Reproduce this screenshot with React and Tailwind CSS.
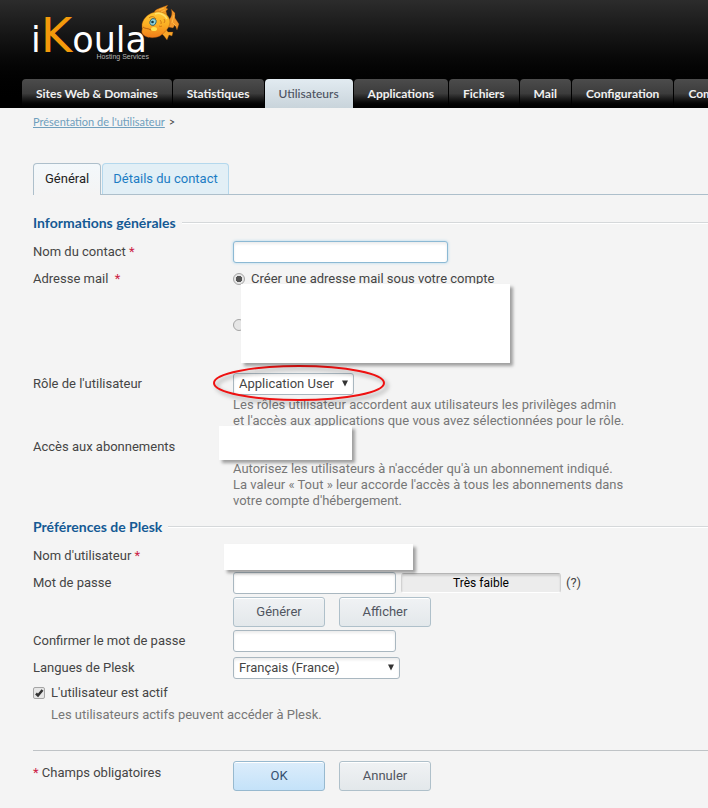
import React, { useState } from 'react';

const navItems = [
  'Sites Web & Domaines',
  'Statistiques',
  'Utilisateurs',
  'Applications',
  'Fichiers',
  'Mail',
  'Configuration',
  'Com',
];

const inputClass =
  'h-[22px] rounded-[3px] border border-[#a9b7c0] bg-white px-[5px] shadow-[inset_0_2px_3px_rgba(0,0,0,0.08)] outline-none';

const Fish = () => (
  <svg className="h-[36px] w-[39px]" viewBox="0 0 39 36" aria-hidden="true">
    <defs>
      <linearGradient id="fish" x1="0" y1="0" x2="0" y2="1">
        <stop offset="0" stopColor="#ffc935" />
        <stop offset="0.5" stopColor="#fbae22" />
        <stop offset="1" stopColor="#f07c1a" />
      </linearGradient>
    </defs>
    <path d="M13 8 C14 4 17 4 19 3 L27 0 L25 3 L27 4 L25 6 L26 10 Z" fill="#f39a24" stroke="#8a4208" strokeWidth="0.3" />
    <path d="M27 16 C30 13 32 9 30 4 L34 8 L34 13 L38 19 L36 25 L34 20 L32 23 L27 22 Z" fill="#f2962a" stroke="#8a4208" strokeWidth="0.3" />
    <path d="M19 27 L25 24 L27 27 L32 27 L31 31 L28 30 L26 35 L23 31 Z" fill="#f8a528" stroke="#8a4208" strokeWidth="0.3" />
    <path d="M1 19 C3 12 8 8 15 7 C22 6 29 10 29 17 C29 23 23 28 19 31 C13 34 3 33 1 28 C0 26 2 24 1 22 Z" fill="url(#fish)" stroke="#a04d0b" strokeWidth="0.4" />
    <path d="M14 9 C19 7 24 10 26 14" fill="none" stroke="#ffe06a" strokeWidth="1.5" />
    <ellipse cx="12" cy="17" rx="3" ry="3.500" transform="rotate(20 12 17)" fill="#8ed3dc" stroke="#23596a" strokeWidth="0.8" />
    <circle cx="11.500" cy="17" r="1.300" fill="#123a48" />
    <path d="M8 13 C10 11 13 11 15 14" fill="none" stroke="#a6540c" strokeWidth="0.7" />
    <path d="M2 22 C4 24 7 23 10 25" fill="none" stroke="#9b4308" strokeWidth="0.7" />
    <ellipse cx="13" cy="24" rx="3" ry="2" fill="#ffe150" />
    <path d="M19 15 q2 2 1 4 M23 14 q2 2 0 4 M18 21 q2 1 3 0" fill="none" stroke="#c3660f" strokeWidth="0.7" />
    <path d="M33 10 L31 18 M35 21 L32 18 M18 5 L23 3 M20 7 L24 5" stroke="#ffc44a" strokeWidth="0.8" />
  </svg>
);

const Logo = () => (
  <a href="#" className="flex h-[79px] items-start pl-[31px] pt-[5px]" aria-label="iKoula Hosting Services">
    <span className="flex w-[110px] flex-col items-end">
      <span className="mt-[12px] flex h-[36px] items-baseline self-start font-['DejaVu_Sans'] text-[35px] leading-[36px] text-white">
        i<span className="text-[48px] text-[#f39a0b]">K</span>oula
      </span>
      <span className="-mr-2 whitespace-nowrap font-['Liberation_Sans'] text-[7px] leading-[8px] text-[#b5b5b5]">
        Hosting Services
      </span>
    </span>
    <Fish />
  </a>
);

const Header = () => (
  <header className="overflow-hidden bg-linear-to-b from-[#2c2c2c] to-black">
    <Logo />
    <nav className="flex gap-[1px] pl-[22px] font-[Lato]">
      {navItems.map((item) => (
        <a
          key={item}
          href="#"
          aria-current={item === 'Utilisateurs' ? 'page' : undefined}
          className={`h-[29px] shrink-0 whitespace-nowrap rounded-t-[4px] px-[14px] text-[12px] leading-[29px] ${
            item === 'Utilisateurs'
              ? 'bg-linear-to-b from-[#e2ebf1] to-[#c9d4db] font-medium text-[#4b5160]'
              : 'bg-linear-to-b from-[#4c4c4c] via-[#3c3c3c] to-black font-bold text-[#f0f0f0]'
          }`}
        >
          {item}
        </a>
      ))}
    </nav>
  </header>
);

const SectionTitle = ({ children }) => (
  <h2 className="mt-2 mb-2 flex h-5 items-center gap-[6px] font-[Lato] text-[14px] leading-4 font-bold text-[#145a94]">
    {children}
    <span className="h-[2px] flex-1 border-t border-[#d5d8da] bg-white" />
  </h2>
);

const Required = () => <span className="text-[#cc2244]">*</span>;

const Row = ({ label, htmlFor, required, children }) => (
  <div className="mb-[5px] flex">
    <label htmlFor={htmlFor} className="w-[200px] shrink-0 leading-[22px]">
      {label} {required && <Required />}
    </label>
    <div className="relative min-w-0 flex-1">{children}</div>
  </div>
);

// blank note laid over private values
const Mask = ({ className }) => (
  <div className={`absolute z-10 bg-white shadow-[3px_3px_3px_rgba(0,0,0,0.35)] ${className}`} />
);

const Select = ({ id, className, options }) => (
  <div className={`relative ${className}`}>
    <select id={id} className={`${inputClass} block w-full appearance-none`}>
      {options.map((option) => (
        <option key={option}>{option}</option>
      ))}
    </select>
    <svg className="pointer-events-none absolute right-[5px] top-[7px] h-[7px] w-[8px]" viewBox="0 0 8 7">
      <path d="M1 0.500h6L4 6.500z" fill="#333" />
    </svg>
  </div>
);

const Button = ({ primary, children }) => (
  <button
    type="button"
    className={`h-[30px] w-[92px] rounded-[3px] border bg-linear-to-b shadow-[inset_0_1px_0_#fff] ${
      primary
        ? 'border-[#97b9cf] from-[#dcedfb] to-[#c4e2f9] text-[#35506f]'
        : 'border-[#afc0ca] from-[#f0f2f4] to-[#e3e8eb] text-[#505560]'
    }`}
  >
    {children}
  </button>
);

const Radio = ({ id, checked, onChange }) => (
  <input
    id={id}
    type="radio"
    name="mail"
    checked={checked}
    onChange={onChange}
    aria-label={id}
    className="h-3 w-3 shrink-0 appearance-none rounded-full border border-[#a5a5a5] bg-[#e6e6e6] checked:bg-radial checked:from-[#555] checked:from-45% checked:to-[#e6e6e6] checked:to-50%"
  />
);

const App = () => {
  const [mail, setMail] = useState('create');
  const [active, setActive] = useState(true);

  return (
    <div className="min-h-screen overflow-hidden bg-[#f4f4f4] pb-4 font-[Roboto,sans-serif] text-[13px] text-[#454545]">
      <Header />

      <main className="pl-[33px]">
        <div className="pt-[6px] font-[Lato] text-[11px] leading-4">
          <a href="#" className="text-[#6f9fbd] underline">Présentation de l'utilisateur</a>
          <span className="ml-1">&gt;</span>
        </div>

        <div className="mt-[33px] mb-[18px] flex h-8 gap-[1px] border-b border-[#adbfcb]">
          <a href="#" className="h-8 rounded-t-[4px] border border-b-0 border-[#adbfcb] bg-linear-to-b from-[#f3f8fb] to-[#f4f4f4] px-[11px] leading-[30px] text-[#222]">
            Général
          </a>
          <a href="#" className="h-[31px] rounded-t-[4px] border border-b-0 border-[#b4d8ed] bg-[#e2eff6] px-[10px] leading-[30px] text-[#1c7cc4]">
            Détails du contact
          </a>
        </div>

        <form>
          <SectionTitle>Informations générales</SectionTitle>
          <Row label="Nom du contact" htmlFor="contact" required>
            <input
              id="contact"
              type="text"
              className="block h-[22px] w-[215px] rounded-[3px] border border-[#8cb9d4] bg-white px-[5px] shadow-[0_0_3px_#a9d3ea,inset_0_2px_3px_rgba(0,0,0,0.08)] outline-none"
            />
          </Row>
          <Row label={'Adresse mail\u00a0'} htmlFor="create" required>
            <div className="flex h-[100px] flex-col gap-6">
              <div className="flex h-[22px] items-center gap-[6px]">
                <Radio id="create" checked={mail === 'create'} onChange={() => setMail('create')} />
                <label htmlFor="create">Créer une adresse mail sous votre compte</label>
              </div>
              <div className="flex h-[22px] items-center">
                <Radio id="other" checked={mail === 'other'} onChange={() => setMail('other')} />
              </div>
            </div>
            <Mask className="left-2 top-4 h-[79px] w-[269px]" />
          </Row>
          <Row label="Rôle de l'utilisateur" htmlFor="role">
            <Select id="role" className="w-[121px]" options={['Application User']} />
            <p className="mt-[2px] pb-[2px] leading-4 text-[#777]">
              Les rôles utilisateur accordent aux utilisateurs les privilèges admin
              <br />
              et l'accès aux applications que vous avez sélectionnées pour le rôle.
            </p>
            <svg
              className="pointer-events-none absolute -left-[21px] -top-[8px] h-[38px] w-[178px] drop-shadow-[3px_3px_2px_rgba(0,0,0,0.35)]"
              viewBox="0 0 178 38"
            >
              <ellipse cx="87" cy="18" rx="85" ry="17" fill="none" stroke="#ee1111" strokeWidth="2" />
            </svg>
          </Row>
          <Row label="Accès aux abonnements">
            <Mask className="-left-[14px] -top-[10px] h-[34px] w-[133px]" />
            <p className="pt-[25px] leading-4 text-[#777]">
              Autorisez les utilisateurs à n'accéder qu'à un abonnement indiqué.
              <br />
              La valeur « Tout » leur accorde l'accès à tous les abonnements dans
              <br />
              votre compte d'hébergement.
            </p>
          </Row>

          <SectionTitle>Préférences de Plesk</SectionTitle>
          <Row label="Nom d'utilisateur" required>
            <Mask className="-left-[9px] -top-px h-[26px] w-[189px]" />
          </Row>
          <Row label="Mot de passe" htmlFor="password">
            <div className="flex items-center gap-[5px]">
              <input id="password" type="password" className={`${inputClass} w-[163px]`} />
              <div className="h-5 w-[160px] rounded-[3px] border border-t-[#b5b5b5] border-x-[#d2d2d2] border-b-white bg-[#ececec] text-center text-[12px] leading-[18px] text-black shadow-[inset_0_2px_2px_rgba(0,0,0,0.12)]">
                Très faible
              </div>
              <span>(?)</span>
            </div>
            <div className="-mb-[2px] mt-[3px] flex gap-[14px]">
              <Button>Générer</Button>
              <Button>Afficher</Button>
            </div>
          </Row>
          <Row label="Confirmer le mot de passe" htmlFor="confirm">
            <input id="confirm" type="password" className={`${inputClass} block w-[163px]`} />
          </Row>
          <Row label="Langues de Plesk" htmlFor="lang">
            <Select id="lang" className="w-[167px]" options={['Français (France)']} />
          </Row>

          <div className="flex h-[18px] items-center gap-[6px]">
            <span className="relative flex">
              <input
                id="active"
                type="checkbox"
                checked={active}
                onChange={() => setActive(!active)}
                className="h-3 w-3 appearance-none rounded-[2px] border border-[#a5a5a5] bg-[#e6e6e6]"
              />
              {active && (
                <svg className="pointer-events-none absolute inset-0 h-3 w-3" viewBox="0 0 12 12">
                  <path d="M3 6.500L5 8.500L9.500 3" fill="none" stroke="#333" strokeWidth="2.500" />
                </svg>
              )}
            </span>
            <label htmlFor="active">L'utilisateur est actif</label>
          </div>
          <p className="mt-[5px] ml-[18px] leading-4 text-[#777]">Les utilisateurs actifs peuvent accéder à Plesk.</p>

          <div className="mt-[27px] flex border-t border-[#bfc3c6] pt-[10px]">
            <div className="w-[200px] shrink-0 leading-6">
              <Required /> Champs obligatoires
            </div>
            <div className="flex gap-[14px]">
              <Button primary>OK</Button>
              <Button>Annuler</Button>
            </div>
          </div>
        </form>
      </main>
    </div>
  );
};

export default App;
